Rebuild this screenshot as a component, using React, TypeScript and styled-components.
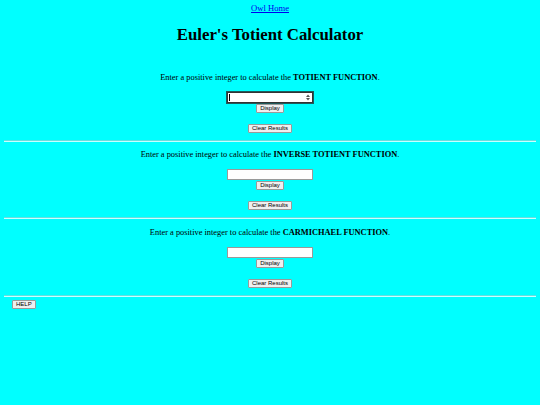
import React from 'react';
import styled, { createGlobalStyle } from 'styled-components';

const GlobalStyle = createGlobalStyle`
  html, body {
    margin: 0;
    padding: 0;
    background: #00ffff;
  }
  body {
    font-family: "Liberation Serif", "Times New Roman", serif;
    color: #000;
  }
`;

const Page = styled.div`
  padding: 2px 4px;
  min-height: 405px;
  box-sizing: border-box;
`;

const Nav = styled.div`
  text-align: center;
  font-size: 8.6px;
  line-height: 12px;
`;

const HomeLink = styled.a`
  color: #0000ee;
  text-decoration: underline;
`;

const Title = styled.h1`
  margin: 9px 0 0;
  text-align: center;
  font-size: 16.8px;
  line-height: 24px;
  font-weight: bold;
`;

const Section = styled.section<{ $first?: boolean }>`
  display: flex;
  flex-direction: column;
  align-items: center;
  padding-top: ${(p) => (p.$first ? '23.5px' : '6.5px')};
`;

const Prompt = styled.p`
  margin: 0;
  font-size: 8.4px;
  line-height: 13px;
`;

const Field = styled.div<{ $focused?: boolean }>`
  position: relative;
  margin-top: 8px;
  width: 86px;
  height: 11px;
  box-sizing: border-box;
  background: #fff;
  border: 1px solid ${(p) => (p.$focused ? '#333' : '#9a9a9a')};
  outline: ${(p) => (p.$focused ? '1px solid #1f5a5a' : 'none')};
`;

const Caret = styled.span`
  position: absolute;
  left: 1px;
  top: 1px;
  width: 1px;
  height: 7px;
  background: #000;
`;

const Spinner = styled.svg`
  position: absolute;
  right: 2px;
  top: 1px;
`;

const Button = styled.button<{ $gap: number }>`
  margin-top: ${(p) => p.$gap}px;
  padding: 0 3px;
  height: 9px;
  font-family: "Liberation Sans", Arial, sans-serif;
  font-size: 6px;
  line-height: 7px;
  color: #000;
  background: #efefef;
  border: 1px solid #9a9a9a;
  border-radius: 1px;
`;

const Rule = styled.hr`
  margin: 7px 0 0;
  height: 0;
  border: 0;
  border-top: 1px solid #66dede;
  border-bottom: 1px solid #c8ffff;
`;

const Footer = styled.div`
  display: flex;
  padding: 3px 0 0 8px;
`;

const sections = [
  { name: 'TOTIENT FUNCTION', focused: true },
  { name: 'INVERSE TOTIENT FUNCTION', focused: false },
  { name: 'CARMICHAEL FUNCTION', focused: false },
];

export default function App() {
  return (
    <>
      <GlobalStyle />
      <Page>
        <Nav>
          <HomeLink href="#">Owl Home</HomeLink>
        </Nav>
        <Title>Euler's Totient Calculator</Title>
        {sections.map((s, i) => (
          <React.Fragment key={s.name}>
            <Section $first={i === 0}>
              <Prompt>
                Enter a positive integer to calculate the <b>{s.name}</b>.
              </Prompt>
              <Field $focused={s.focused}>
                {s.focused && (
                  <>
                    <Caret />
                    <Spinner width="4" height="7" viewBox="0 0 4 7">
                      <path d="M0 3 L2 0.5 L4 3 Z" fill="#555" />
                      <path d="M0 4 L2 6.5 L4 4 Z" fill="#555" />
                    </Spinner>
                  </>
                )}
              </Field>
              <Button $gap={1}>Display</Button>
              <Button $gap={11}>Clear Results</Button>
            </Section>
            <Rule />
          </React.Fragment>
        ))}
        <Footer>
          <Button $gap={0}>HELP</Button>
        </Footer>
      </Page>
    </>
  );
}
